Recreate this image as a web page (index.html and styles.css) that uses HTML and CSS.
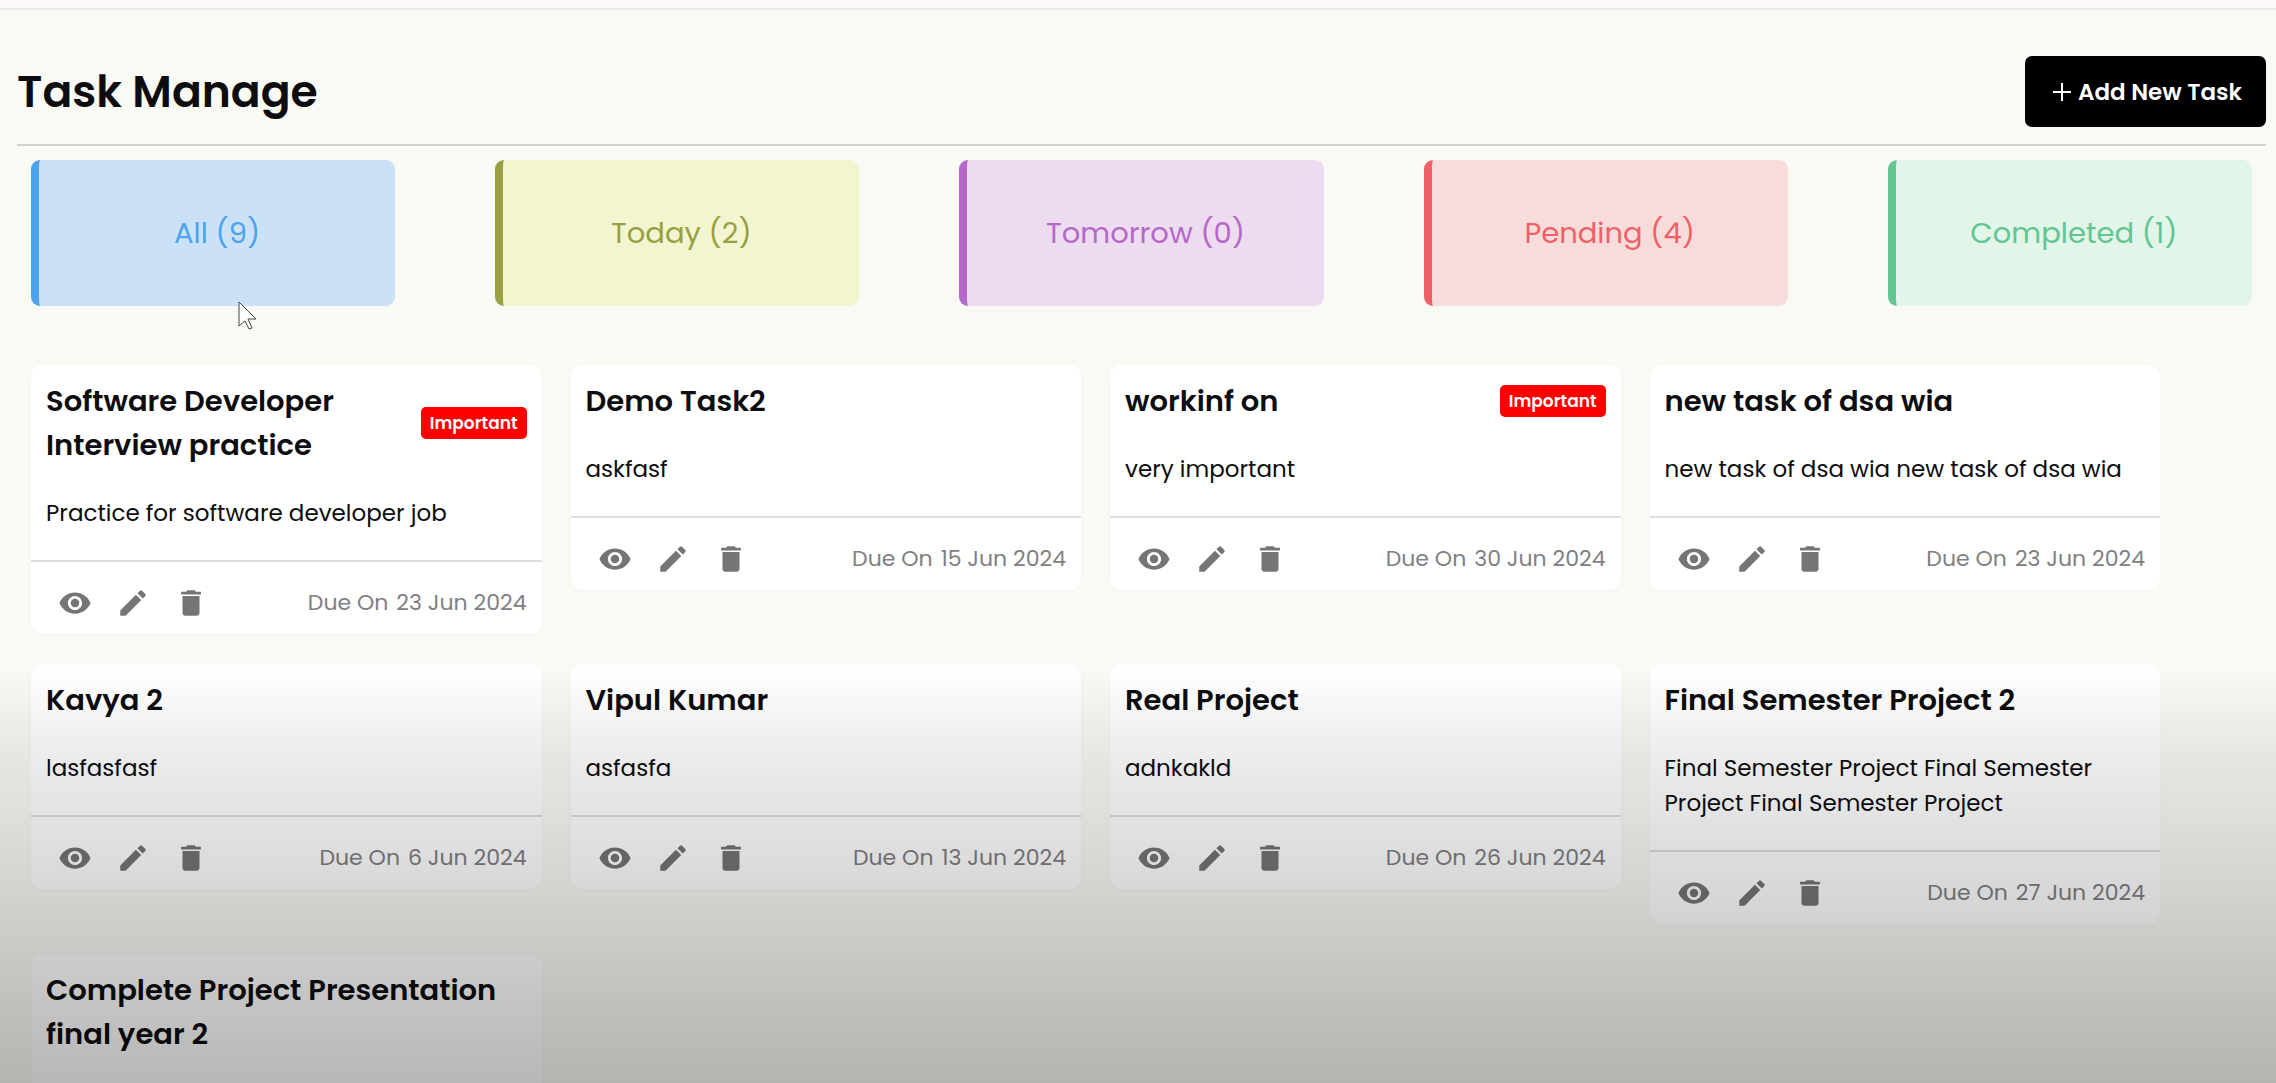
FILE: index.html
```html
<!DOCTYPE html>
<html lang="en">
<head>
<meta charset="utf-8">
<title>Task Manage</title>
<link rel="stylesheet" href="styles.css">
</head>
<body>
<svg class="sprite" aria-hidden="true">
  <symbol id="eye" viewBox="0 0 24 24"><path d="M12 4.500C7 4.500 2.730 7.610 1 12c1.730 4.390 6 7.500 11 7.500s9.270-3.110 11-7.500c-1.730-4.390-6-7.500-11-7.500zM12 17c-2.760 0-5-2.240-5-5s2.240-5 5-5 5 2.240 5 5-2.240 5-5 5zm0-8c-1.660 0-3 1.340-3 3s1.340 3 3 3 3-1.340 3-3-1.340-3-3-3z"/></symbol>
  <symbol id="pen" viewBox="0 0 24 24"><path d="M3 17.250V21h3.750L17.810 9.940l-3.750-3.750L3 17.250zM20.710 7.040a1 1 0 0 0 0-1.410l-2.340-2.340a1 1 0 0 0-1.410 0l-1.830 1.830 3.750 3.750 1.830-1.830z"/></symbol>
  <symbol id="bin" viewBox="0 0 24 24"><path d="M6 19c0 1.100.9 2 2 2h8c1.100 0 2-.9 2-2V7H6v12zM19 4h-3.500l-1-1h-5l-1 1H5v2h14V4z"/></symbol>
</svg>
<div class="topbar"></div>
<main class="page">
  <header class="header">
    <h1 class="title">Task Manage</h1>
    <button class="add" type="button"><svg class="plus" viewBox="0 0 20 20" aria-hidden="true"><path d="M10 1v18M1 10h18"/></svg>Add New Task</button>
  </header>
  <nav class="filters" aria-label="Task filters">
    <button class="filter all" type="button">All (9)</button>
    <button class="filter today" type="button">Today (2)</button>
    <button class="filter tomorrow" type="button">Tomorrow (0)</button>
    <button class="filter pending" type="button">Pending (4)</button>
    <button class="filter completed" type="button">Completed (1)</button>
  </nav>
  <section class="tasks" aria-label="Tasks">
    <article class="card">
      <div class="body"><div class="head"><h2 class="name">Software Developer Interview practice</h2><span class="badge">Important</span></div><p class="text">Practice for software developer job</p></div>
      <footer class="foot"><button class="act" type="button" aria-label="View"><svg><use href="#eye"/></svg></button><button class="act" type="button" aria-label="Edit"><svg><use href="#pen"/></svg></button><button class="act" type="button" aria-label="Delete"><svg><use href="#bin"/></svg></button><p class="due"><span>Due On</span><time>23 Jun 2024</time></p></footer>
    </article>
    <article class="card">
      <div class="body"><div class="head"><h2 class="name">Demo Task2</h2></div><p class="text">askfasf</p></div>
      <footer class="foot"><button class="act" type="button" aria-label="View"><svg><use href="#eye"/></svg></button><button class="act" type="button" aria-label="Edit"><svg><use href="#pen"/></svg></button><button class="act" type="button" aria-label="Delete"><svg><use href="#bin"/></svg></button><p class="due"><span>Due On</span><time>15 Jun 2024</time></p></footer>
    </article>
    <article class="card">
      <div class="body"><div class="head"><h2 class="name">workinf on</h2><span class="badge">Important</span></div><p class="text">very important</p></div>
      <footer class="foot"><button class="act" type="button" aria-label="View"><svg><use href="#eye"/></svg></button><button class="act" type="button" aria-label="Edit"><svg><use href="#pen"/></svg></button><button class="act" type="button" aria-label="Delete"><svg><use href="#bin"/></svg></button><p class="due"><span>Due On</span><time>30 Jun 2024</time></p></footer>
    </article>
    <article class="card">
      <div class="body"><div class="head"><h2 class="name">new task of dsa wia</h2></div><p class="text">new task of dsa wia new task of dsa wia</p></div>
      <footer class="foot"><button class="act" type="button" aria-label="View"><svg><use href="#eye"/></svg></button><button class="act" type="button" aria-label="Edit"><svg><use href="#pen"/></svg></button><button class="act" type="button" aria-label="Delete"><svg><use href="#bin"/></svg></button><p class="due"><span>Due On</span><time>23 Jun 2024</time></p></footer>
    </article>
    <article class="card">
      <div class="body"><div class="head"><h2 class="name">Kavya 2</h2></div><p class="text">lasfasfasf</p></div>
      <footer class="foot"><button class="act" type="button" aria-label="View"><svg><use href="#eye"/></svg></button><button class="act" type="button" aria-label="Edit"><svg><use href="#pen"/></svg></button><button class="act" type="button" aria-label="Delete"><svg><use href="#bin"/></svg></button><p class="due"><span>Due On</span><time>6 Jun 2024</time></p></footer>
    </article>
    <article class="card">
      <div class="body"><div class="head"><h2 class="name">Vipul Kumar</h2></div><p class="text">asfasfa</p></div>
      <footer class="foot"><button class="act" type="button" aria-label="View"><svg><use href="#eye"/></svg></button><button class="act" type="button" aria-label="Edit"><svg><use href="#pen"/></svg></button><button class="act" type="button" aria-label="Delete"><svg><use href="#bin"/></svg></button><p class="due"><span>Due On</span><time>13 Jun 2024</time></p></footer>
    </article>
    <article class="card">
      <div class="body"><div class="head"><h2 class="name">Real Project</h2></div><p class="text">adnkakld</p></div>
      <footer class="foot"><button class="act" type="button" aria-label="View"><svg><use href="#eye"/></svg></button><button class="act" type="button" aria-label="Edit"><svg><use href="#pen"/></svg></button><button class="act" type="button" aria-label="Delete"><svg><use href="#bin"/></svg></button><p class="due"><span>Due On</span><time>26 Jun 2024</time></p></footer>
    </article>
    <article class="card">
      <div class="body"><div class="head"><h2 class="name">Final Semester Project 2</h2></div><p class="text">Final Semester Project Final Semester Project Final Semester Project</p></div>
      <footer class="foot"><button class="act" type="button" aria-label="View"><svg><use href="#eye"/></svg></button><button class="act" type="button" aria-label="Edit"><svg><use href="#pen"/></svg></button><button class="act" type="button" aria-label="Delete"><svg><use href="#bin"/></svg></button><p class="due"><span>Due On</span><time>27 Jun 2024</time></p></footer>
    </article>
    <article class="card">
      <div class="body"><div class="head"><h2 class="name">Complete Project Presentation final year 2</h2></div></div>
    </article>
  </section>
</main>
<div class="shade"></div>
<svg class="cursor" viewBox="0 0 20 30" aria-hidden="true"><path d="M1 1v24l6-5 4 8 3-1-4-9h8z"/></svg>
</body>
</html>
```
FILE: styles.css
```css
* { box-sizing: border-box; }
body {
  margin: 0;
  height: 100vh;
  overflow: hidden;
  background: #fafaf5;
  color: #0d0d10;
  font-family: Poppins, Inter, sans-serif;
}
h1, h2, p { margin: 0; }
button { font-family: inherit; cursor: pointer; }
.sprite { display: none; }
.topbar { height: 10px; background: #fdf7fb; border-bottom: 2px solid #ebe9e7; }
.page { padding: 46px 10px 0 17px; }
.header {
  display: flex;
  justify-content: space-between;
  align-items: center;
  padding-bottom: 17px;
  border-bottom: 2px solid #d3d3ce;
}
.title { font-size: 44px; line-height: 70px; font-weight: 600; }
.add {
  display: flex;
  align-items: center;
  gap: 6px;
  height: 71px;
  padding: 0 24px 0 27px;
  border: 0;
  border-radius: 7px;
  background: #000;
  color: #fff;
  font-size: 23px;
  font-weight: 600;
}
.plus { width: 20px; height: 20px; fill: none; stroke: #fff; stroke-width: 2; }
.filters {
  display: flex;
  justify-content: space-between;
  padding: 14px 14px 0;
}
.filter {
  width: 16.4%;
  height: 146px;
  border: 0;
  border-left: 8px solid;
  border-radius: 9px;
  font-size: 29px;
  font-weight: 400;
}
.all { color: #4ba3ec; background: #cae1f7; }
.today { color: #98a043; background: #f3f4d0; }
.tomorrow { color: #b568c8; background: #eddbef; }
.pending { color: #ee6166; background: #f8dcdc; }
.completed { color: #62c592; background: #e1f5e8; }
.tasks {
  display: grid;
  grid-template-columns: repeat(4, 1fr);
  align-items: start;
  gap: 30px 29px;
  width: 96%;
  padding: 59px 16px 0 14px;
}
.card { border-radius: 12px; background: #fff; box-shadow: 0 1px 4px rgba(0, 0, 0, .02); }
.body { padding: 14px 15px 29px; }
.head { display: flex; justify-content: space-between; align-items: center; gap: 60px; margin-bottom: 29px; }
.name { font-size: 29px; line-height: 44px; font-weight: 600; }
.badge {
  padding: 0 9px;
  border-radius: 5px;
  background: #f00;
  color: #fff;
  font-size: 17px;
  line-height: 32px;
  font-weight: 600;
}
.text { font-size: 23px; line-height: 35px; }
.foot {
  display: flex;
  align-items: center;
  height: 74px;
  padding: 9px 15px 0 27px;
  border-top: 2px solid #dededf;
}
.act { width: 34px; height: 34px; margin-right: 24px; padding: 0; border: 0; background: none; }
.act svg { display: block; width: 34px; height: 34px; fill: #757575; }
.due { display: flex; gap: 8px; margin-left: auto; color: #808084; font-size: 22px; line-height: 34px; }
.shade {
  position: fixed;
  inset: 60% 0 0;
  pointer-events: none;
  background: linear-gradient(rgba(0, 0, 0, 0) 4%, rgba(0, 0, 0, .07) 23%, rgba(0, 0, 0, .1) 35%, rgba(0, 0, 0, .16) 58%, rgba(0, 0, 0, .23) 81%, rgba(0, 0, 0, .28));
}
.cursor { position: fixed; left: 238px; top: 301px; width: 20px; height: 30px; fill: #fff; stroke: #444; stroke-width: 1; }
```
